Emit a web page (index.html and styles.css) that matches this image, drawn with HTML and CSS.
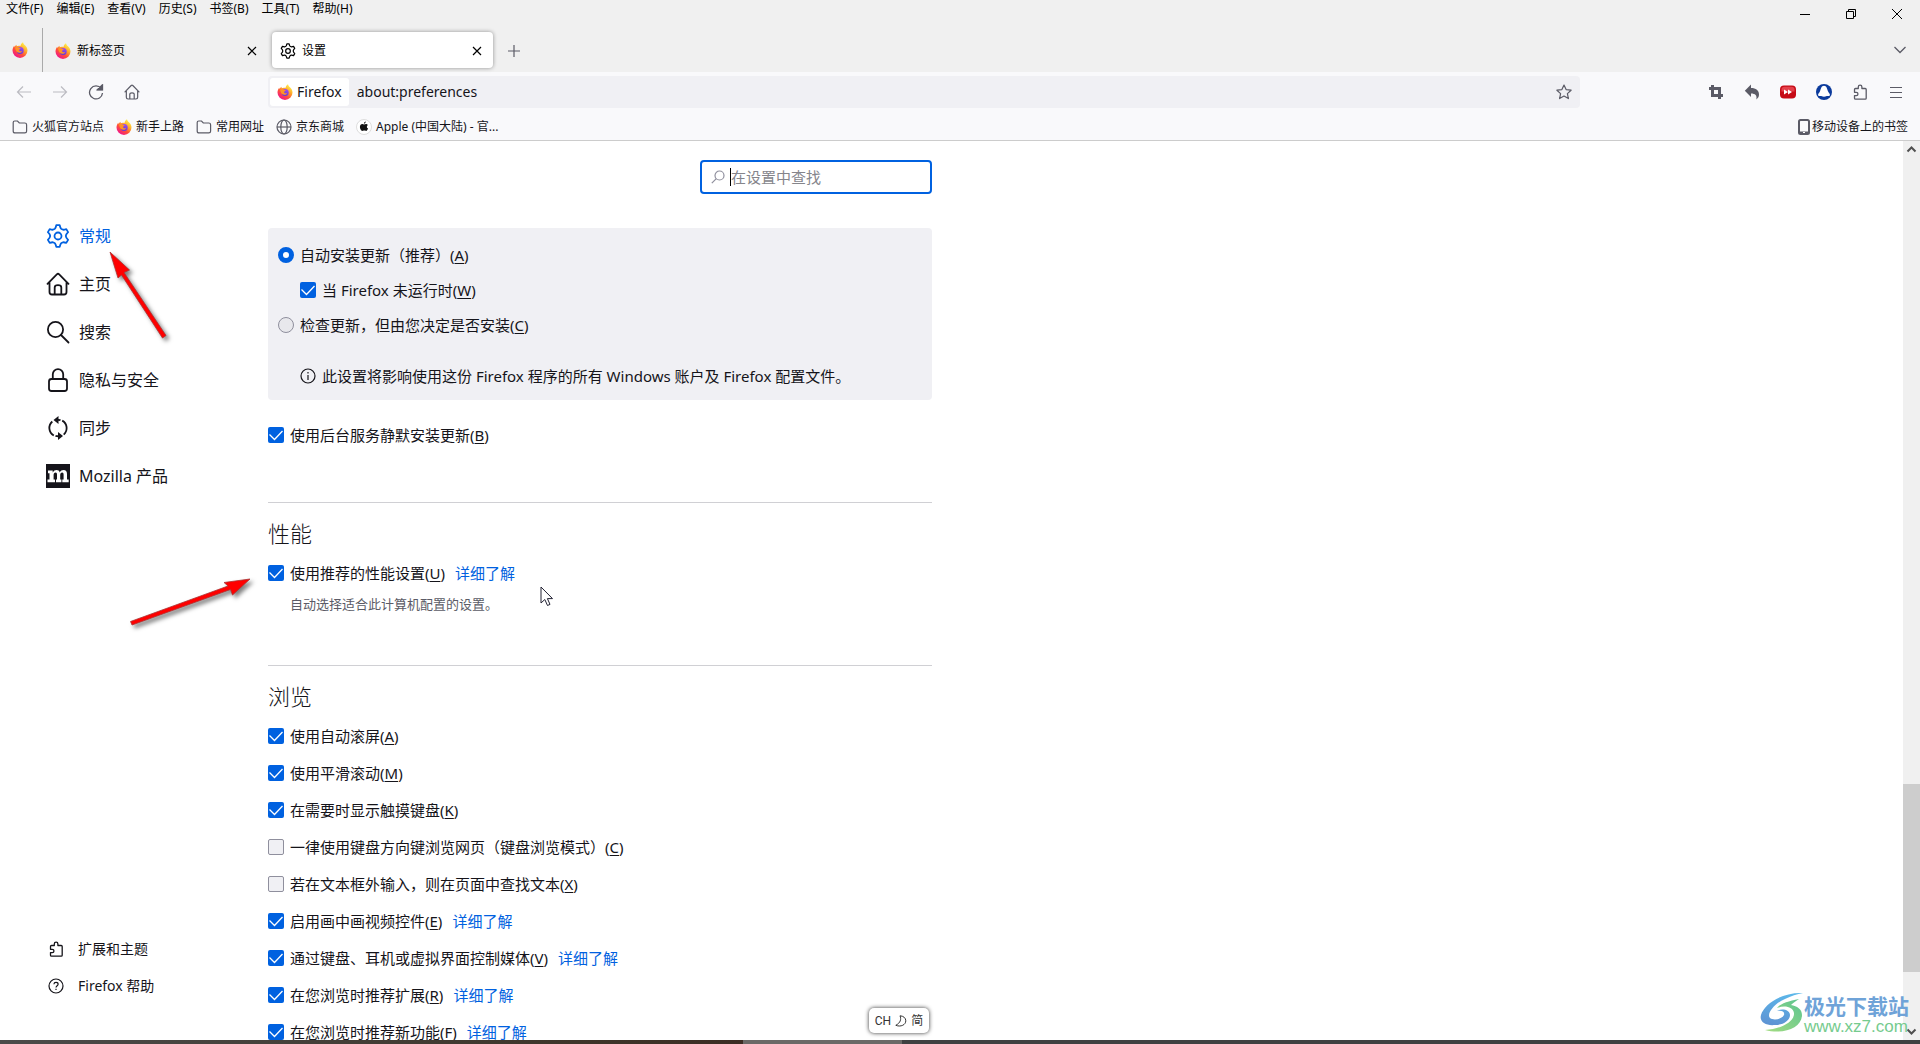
FILE: index.html
```html
<!DOCTYPE html>
<html lang="zh-CN">
<head>
<meta charset="utf-8">
<title>设置</title>
<link rel="stylesheet" href="styles.css">
</head>
<body>
<svg class="defs" aria-hidden="true">
  <defs>
    <linearGradient id="flame" x1="0.85" y1="0.1" x2="0.25" y2="0.95">
      <stop offset="0" stop-color="#fff44f"/><stop offset="0.35" stop-color="#ffa72a"/><stop offset="0.65" stop-color="#ff4f3a"/><stop offset="1" stop-color="#f0148c"/>
    </linearGradient>
    <linearGradient id="orb" x1="0.7" y1="0" x2="0.3" y2="1">
      <stop offset="0" stop-color="#a44cf0"/><stop offset="1" stop-color="#5a3ad6"/>
    </linearGradient>
    <linearGradient id="swirl" x1="0.7" y1="0" x2="0.5" y2="1">
      <stop offset="0" stop-color="#5cb8ea"/><stop offset="1" stop-color="#5e94d4"/>
    </linearGradient>
    <linearGradient id="leaf" x1="1" y1="0" x2="0" y2="1">
      <stop offset="0" stop-color="#5cc490"/><stop offset="1" stop-color="#a4dc82"/>
    </linearGradient>
    <symbol id="i-firefox" viewBox="0 0 16 16">
      <path d="M11 .2c.3 1.300.8 2 1.700 2.800 1.800 1.500 2.800 3.300 2.800 5.600A7.500 7.400 0 0 1 .5 8.600c0-2 .7-3.600 1.700-4.900l.3 1.300c.5-1 1.200-1.700 2-2.200l.2 1.400c1.200-.6 2.600-.7 3.800-.2C8.600 2.400 9.500 1.200 11 .2z" fill="url(#flame)"/>
      <circle cx="8.200" cy="8.400" r="3.500" fill="url(#orb)"/>
      <path d="M3 5.500c1.500-.9 3-.7 4 .2.700.2 1.400.2 1.800.4 0 1-1.500 1.100-1.800 1.900.3 1.400 1.800 1.700 3.200.9-.7 2.400-5 2.800-6.300-.3-.4-1-.6-2-.9-3.100z" fill="#ff9326"/>
    </symbol>
    <symbol id="i-gear" viewBox="0 0 24 24">
      <path d="M10.300 1.200h3.400q.7 2.800 1.300 3.500.9.800 2 1 1 .2 3.300-.6l1.800 3q-2.200 2.200-2.300 3.900.1 1.700 2.300 3.900l-1.800 3q-2.300-.8-3.300-.6-1.100.2-2 1-.6.700-1.300 3.500h-3.400q-.7-2.800-1.300-3.500-.9-.8-2-1-1-.2-3.300.6l-1.800-3q2.200-2.200 2.300-3.900-.1-1.700-2.300-3.900l1.800-3q2.300.8 3.300.6 1.100-.2 2-1 .6-.7 1.300-3.500z" fill="none" stroke="currentColor" stroke-width="1.800" stroke-linejoin="round"/>
      <circle cx="12" cy="12" r="3.500" fill="none" stroke="currentColor" stroke-width="1.800"/>
    </symbol>
    <symbol id="i-home" viewBox="0 0 24 24">
      <path d="M1.500 11.800 10.800 2.300q1.200-1.100 2.400 0l9.300 9.500M3.500 10.500V20q0 2.500 2.500 2.500h12q2.500 0 2.500-2.500v-9.500M8.700 22v-6.500q0-2.300 3.300-2.300t3.300 2.300V22" fill="none" stroke="currentColor" stroke-width="1.800" stroke-linecap="round"/>
    </symbol>
    <symbol id="i-search" viewBox="0 0 24 24">
      <circle cx="9.500" cy="9.500" r="7.600" fill="none" stroke="currentColor" stroke-width="1.800"/><path d="m15 15 7.500 7.500" stroke="currentColor" stroke-width="1.800" stroke-linecap="round"/>
    </symbol>
    <symbol id="i-lock" viewBox="0 0 24 24">
      <rect x="3" y="11" width="18" height="12" rx="2.500" fill="none" stroke="currentColor" stroke-width="1.800"/><path d="M6.800 11V6.300a5.200 5.200 0 0 1 10.400 0V11" fill="none" stroke="currentColor" stroke-width="1.800"/>
    </symbol>
    <symbol id="i-sync" viewBox="0 0 24 24">
      <path d="M7.800 19.500A8.600 8.600 0 0 1 6.300 5.500M16.200 4.600a8.600 8.600 0 0 1 1.500 14M10 4q2.500-.4 4.500.2M9.500 19.800q2 .7 4.500.3" fill="none" stroke="currentColor" stroke-width="1.800"/>
      <path d="M12.500 0v8L7.500 4zM12 16v8l5-4z" fill="currentColor"/>
    </symbol>
    <symbol id="i-puzzle" viewBox="0 0 16 16">
      <path d="M6.300 4.500V3a1.800 1.800 0 0 1 3.600 0v1.500h3.300q1 0 1 1v8.700q0 1-1 1H3.500q-1 0-1-1V11.600h1.800a1.600 1.600 0 0 0 0-3.300H2.500V5.500q0-1 1-1z" fill="none" stroke="currentColor" stroke-width="1.300" stroke-linejoin="round"/>
    </symbol>
    <symbol id="i-folder" viewBox="0 0 16 16">
      <path d="M1.200 4V3.500q0-1.500 1.500-1.500h2.800l1.800 2h5.500q1.800 0 1.800 1.700v6.500q0 1.700-1.800 1.700H3q-1.800 0-1.800-1.700z" fill="none" stroke="currentColor" stroke-width="1.200"/>
    </symbol>
    <symbol id="i-close" viewBox="0 0 16 16"><path d="m4 4 8 8M12 4l-8 8" stroke="currentColor" stroke-width="1.200"/></symbol>
  </defs>
</svg>

<header class="chrome">
  <div class="titlebar">
    <nav class="menubar">
      <button>文件(F)</button><button>编辑(E)</button><button>查看(V)</button><button>历史(S)</button><button>书签(B)</button><button>工具(T)</button><button>帮助(H)</button>
    </nav>
    <div class="window-controls">
      <button aria-label="最小化"><svg width="10" height="10"><path d="M0 5.500h10" stroke="#000"/></svg></button>
      <button aria-label="还原"><svg width="10" height="10" fill="none" stroke="#000"><path d="M.5 2.500h7v7h-7zM2.500 2V.5h7v7H8"/></svg></button>
      <button aria-label="关闭"><svg width="10" height="10"><path d="m0 0 10 10M10 0 0 10" stroke="#000"/></svg></button>
    </div>
  </div>
  <div class="tabstrip">
    <div class="pinned"><svg class="s16"><use href="#i-firefox"/></svg></div>
    <div class="tab">
      <svg class="s16"><use href="#i-firefox"/></svg><span>新标签页</span>
      <button aria-label="关闭标签页"><svg class="s16"><use href="#i-close"/></svg></button>
    </div>
    <div class="tab active">
      <svg class="s16"><use href="#i-gear"/></svg><span>设置</span>
      <button aria-label="关闭标签页"><svg class="s16"><use href="#i-close"/></svg></button>
    </div>
    <button class="newtab" aria-label="新建标签页"><svg width="12" height="12"><path d="M6 0v12M0 6h12" stroke="#5b5b66" stroke-width="1.200"/></svg></button>
    <button class="alltabs" aria-label="列出所有标签页"><svg width="12" height="8"><path d="m.5 1 5.500 5.500L11.500 1" fill="none" stroke="#5b5b66" stroke-width="1.300"/></svg></button>
  </div>
  <div class="toolbar">
    <button class="dim" aria-label="后退"><svg class="s16" fill="none" stroke="currentColor" stroke-width="1.200"><path d="M15 8H1.500M7 2.500 1.500 8 7 13.500"/></svg></button>
    <button class="dim" aria-label="前进"><svg class="s16" fill="none" stroke="currentColor" stroke-width="1.200"><path d="M1 8h13.500M9 2.500 14.500 8 9 13.500"/></svg></button>
    <button aria-label="重新加载"><svg class="s16" fill="none" stroke="currentColor" stroke-width="1.300"><path d="M13.200 4.500A6.500 6.500 0 1 0 14.500 9M9.500 5.500h4.700V1z"/><path d="M10 5.800h4.500V1.500z" fill="currentColor"/></svg></button>
    <button aria-label="主页"><svg class="s16"><use href="#i-home"/></svg></button>
    <div class="spring"></div>
    <div class="urlbar">
      <span class="identity"><svg class="s16"><use href="#i-firefox"/></svg>Firefox</span>
      <input type="text" value="about:preferences" aria-label="地址">
      <button aria-label="收藏"><svg class="s16" fill="none" stroke="currentColor" stroke-width="1.200" stroke-linejoin="round"><path d="m8 1 2.100 4.600 5 .6-3.700 3.400 1 5L8 12.100l-4.400 2.500 1-5L.9 6.200l5-.6z"/></svg></button>
    </div>
    <div class="spring"></div>
    <button aria-label="截图"><svg class="s16" fill="none" stroke="currentColor" stroke-width="3"><path d="M1 4.500h10.500V15M4.500 1v10.500H15"/></svg></button>
    <button aria-label="撤销"><svg class="s16"><path d="M7 .5v3.600c5 0 8 2.400 8 6.500 0 2-.8 3.700-2.700 4.800 1-4-1-6-5.300-6v3.700L.8 6.800z" fill="currentColor"/></svg></button>
    <button aria-label="视频加速"><svg class="s16"><rect y="1.500" width="16" height="13" rx="4" fill="#c60b16"/><path d="M1.500 7.500v-2q0-2.700 3-2.700h7q3 0 3 2.700v2z" fill="#e4404a"/><path d="m4 5.500 4 2.500-4 2.500zM8 5.500l4 2.500-4 2.500z" fill="#fff"/></svg></button>
    <button aria-label="扩展"><svg class="s16"><circle cx="8" cy="8" r="8" fill="#0c3b9c"/><path d="M8 1.800c2.700 0 3 3.100 4 5.400.8 1.700 2 2.600 2 3.900 0 1-1.500 1-2.600 1-.9 0-1.400.7-3.400.7s-2.500-.7-3.400-.7c-1.100 0-2.600 0-2.600-1 0-1.300 1.200-2.200 2-3.900 1-2.300 1.300-5.400 4-5.400z" fill="#fff"/></svg></button>
    <button aria-label="附加组件"><svg class="s16"><use href="#i-puzzle"/></svg></button>
    <button aria-label="菜单"><svg class="s16"><path d="M2 3.500h12M2 8.500h12M2 13.500h12" stroke="currentColor" stroke-width="1.200"/></svg></button>
  </div>
  <nav class="bookmarks">
    <a href="#"><svg class="s16"><use href="#i-folder"/></svg>火狐官方站点</a>
    <a href="#"><svg class="s16"><use href="#i-firefox"/></svg>新手上路</a>
    <a href="#"><svg class="s16"><use href="#i-folder"/></svg>常用网址</a>
    <a href="#"><svg class="s16" fill="none" stroke="currentColor" stroke-width="1.200"><circle cx="8" cy="8" r="7"/><ellipse cx="8" cy="8" rx="3.200" ry="7"/><path d="M1 8h14"/></svg>京东商城</a>
    <a href="#"><svg class="s16"><circle cx="8" cy="8" r="7.500" fill="#fff" stroke="#ddd"/><path d="M8 5.500c.8 0 1.400-.6 2.200-.5.700 0 1.300.4 1.600.9-1.400 1-1.200 2.900.3 3.600-.4 1-1.200 2.400-2 2.400-.7 0-1-.4-1.900-.4s-1.200.4-1.900.4C5 11.900 3.900 9.700 3.900 8c0-1.900 1.100-3 2.400-3 .7 0 1.200.5 1.700.5zM7.900 4.800c0-1.200.9-2.100 1.900-2.200 0 1.200-.9 2.200-1.900 2.200z" fill="#111"/></svg>Apple (中国大陆) - 官...</a>
    <a href="#" class="mobile"><svg width="12" height="16"><rect x="1" y="1" width="10" height="14" rx="1.500" fill="none" stroke="currentColor" stroke-width="2"/><path d="M1 13.500h10" stroke="currentColor" stroke-width="2"/><path d="M5 13.500h2" stroke="#fff"/></svg>移动设备上的书签</a>
  </nav>
</header>

<div class="page">
  <aside class="sidebar">
    <nav class="categories">
      <a href="#" class="selected"><svg><use href="#i-gear"/></svg>常规</a>
      <a href="#"><svg><use href="#i-home"/></svg>主页</a>
      <a href="#"><svg><use href="#i-search"/></svg>搜索</a>
      <a href="#"><svg><use href="#i-lock"/></svg>隐私与安全</a>
      <a href="#"><svg><use href="#i-sync"/></svg>同步</a>
      <a href="#"><svg><rect width="24" height="24" fill="#15141a"/><path d="M2 6.500h4.700v2C7.700 6.800 8.900 6 10.500 6c1.700 0 2.800.8 3.200 2.400C14.700 6.800 15.900 6 17.500 6c2.300 0 3.500 1.400 3.500 3.900v5.500h1.700v2.800h-6.400v-2.800h1.300v-4.800c0-1.300-.4-2-1.400-2-1.300 0-2 1.100-2 2.600v4.200h1.200v2.800H10v-2.800h1v-4.800c0-1.300-.4-2-1.400-2-1.300 0-2 1.100-2 2.600v4.200H9v2.800H1.500v-2.800h2V9.300H2z" fill="#fff"/></svg>Mozilla 产品</a>
    </nav>
    <nav class="sidefoot">
      <a href="#"><svg class="s16"><use href="#i-puzzle"/></svg>扩展和主题</a>
      <a href="#"><svg class="s16" fill="none" stroke="currentColor" stroke-width="1.200"><circle cx="8" cy="8" r="7"/><path d="M5.900 6.300C6 5 6.900 4.400 8 4.400s2.100.7 2.100 1.800C10.100 7.600 8 7.800 8 9.500M8 10.700V12"/></svg>Firefox 帮助</a>
    </nav>
  </aside>

  <main class="pane">
    <div class="searchrow">
      <label class="search">
        <svg width="14" height="14" fill="none" stroke="#8f8f9d" stroke-width="1.200"><circle cx="8.500" cy="5.500" r="4.500"/><path d="M5.300 8.700.8 13.200"/></svg>
        <i class="caret"></i><input type="text" placeholder="在设置中查找" aria-label="在设置中查找">
      </label>
    </div>
    <section class="updates">
      <div class="box">
        <label class="opt"><input type="radio" name="upd" checked><span>自动安装更新（推荐）(<u>A</u>)</span></label>
        <label class="opt indent"><input type="checkbox" checked><span>当 Firefox 未运行时(<u>W</u>)</span></label>
        <label class="opt"><input type="radio" name="upd"><span>检查更新，但由您决定是否安装(<u>C</u>)</span></label>
        <p class="opt indent note"><svg class="s16" fill="none" stroke="currentColor" stroke-width="1.200"><circle cx="8" cy="8" r="7"/><path d="M8 7v5M8 4v1.500"/></svg><span>此设置将影响使用这份 Firefox 程序的所有 Windows 账户及 Firefox 配置文件。</span></p>
      </div>
      <label class="opt"><input type="checkbox" checked><span>使用后台服务静默安装更新(<u>B</u>)</span></label>
    </section>
    <section>
      <h2>性能</h2>
      <div class="row"><label class="opt"><input type="checkbox" checked><span>使用推荐的性能设置(<u>U</u>)</span></label><a href="#">详细了解</a></div>
      <p class="desc">自动选择适合此计算机配置的设置。</p>
    </section>
    <section class="browsing">
      <h2>浏览</h2>
      <div class="row"><label class="opt"><input type="checkbox" checked><span>使用自动滚屏(<u>A</u>)</span></label></div>
      <div class="row"><label class="opt"><input type="checkbox" checked><span>使用平滑滚动(<u>M</u>)</span></label></div>
      <div class="row"><label class="opt"><input type="checkbox" checked><span>在需要时显示触摸键盘(<u>K</u>)</span></label></div>
      <div class="row"><label class="opt"><input type="checkbox"><span>一律使用键盘方向键浏览网页（键盘浏览模式）(<u>C</u>)</span></label></div>
      <div class="row"><label class="opt"><input type="checkbox"><span>若在文本框外输入，则在页面中查找文本(<u>X</u>)</span></label></div>
      <div class="row"><label class="opt"><input type="checkbox" checked><span>启用画中画视频控件(<u>E</u>)</span></label><a href="#">详细了解</a></div>
      <div class="row"><label class="opt"><input type="checkbox" checked><span>通过键盘、耳机或虚拟界面控制媒体(<u>V</u>)</span></label><a href="#">详细了解</a></div>
      <div class="row"><label class="opt"><input type="checkbox" checked><span>在您浏览时推荐扩展(<u>R</u>)</span></label><a href="#">详细了解</a></div>
      <div class="row"><label class="opt"><input type="checkbox" checked><span>在您浏览时推荐新功能(<u>F</u>)</span></label><a href="#">详细了解</a></div>
    </section>
  </main>

  <div class="scrollbar">
    <svg width="17" height="17"><path d="m4.500 10.500 4-4 4 4" fill="none" stroke="#505050" stroke-width="2"/></svg>
    <div class="track"><div class="thumb"></div></div>
    <svg width="17" height="17"><path d="m4.500 6.500 4 4 4-4" fill="none" stroke="#505050" stroke-width="2"/></svg>
  </div>
</div>
<div class="taskbar"></div>

<svg class="overlay arrow-a" width="80" height="110"><path d="m11 12 19.500 18-5.500 2.500L67 95.500l-3.500 2.500-41-63-3.500 3z" fill="#ff0000" stroke="#a33" stroke-width=".8"/></svg>
<svg class="overlay arrow-b" width="140" height="70"><path d="m131 19-17.500 16-2-5.500L13 65l-1.500-3.500L109 26l-4-3.500z" fill="#ff0000" stroke="#a33" stroke-width=".8"/></svg>
<svg class="overlay pointer" width="14" height="21"><path d="M1 1v16l3.800-3.500 2.700 6 2.500-1.100-2.600-5.800H12.500z" fill="#fff" stroke="#223" stroke-width="1"/></svg>
<div class="overlay ime"><span>CH</span><svg width="12" height="12"><path d="M5 .8c1.500 3.500.5 7-4.200 9.500 5 2 10-.5 10-4.500C10.800 3 8.500 1 5 .8z" fill="none" stroke="#333"/></svg><span>简</span></div>
<div class="overlay watermark">
  <svg width="44" height="41" viewBox="0 0 44 41"><path d="M43 1C22 0 4 12 1 23c-2 7 5 11 14 10 9 0 15-5 15-10 0-5-8-7-13-4 5-1 8 1 7 4-2 4-10 6-14 3-4-4 5-15 15-19C31 4 37 2 43 1z" fill="url(#swirl)"/><path d="M39 7C28 9 20 12 17 16c8-3 16-1 17 5 1 8-12 16-29 17 18 5 37-2 37-15 0-6-5-9-11-10 2-2 5-4 8-6z" fill="url(#leaf)"/></svg>
  <div><b>极光下载站</b><span>www.xz7.com</span></div>
</div>
</body>
</html>
```
FILE: styles.css
```css
* { box-sizing: border-box; }
body {
  margin: 0;
  height: 100vh;
  display: flex;
  flex-direction: column;
  overflow: hidden;
  background: #fff;
  color: #15141a;
  font: 15px/20px "Noto Sans", "Noto Sans CJK SC", sans-serif;
}
button {
  display: flex;
  align-items: center;
  justify-content: center;
  padding: 0;
  border: 0;
  background: none;
  color: inherit;
  font: inherit;
}
a { color: inherit; text-decoration: none; }
p, h2 { margin: 0; }
svg { flex: none; }
.defs { position: absolute; width: 0; height: 0; }
.s16 { width: 16px; height: 16px; }

/* Browser chrome */
.chrome {
  flex: none;
  background: #f9f9fb;
  border-bottom: 1px solid #ccc;
  font-size: 12px;
}
.titlebar { display: flex; height: 28px; background: #f0f0f0; }
.menubar { display: flex; gap: 13px; height: 18px; padding-left: 6px; color: #000; line-height: 18px; }
.window-controls { display: flex; margin-left: auto; }
.window-controls button { width: 46px; height: 28px; }

.tabstrip { display: flex; gap: 4px; height: 44px; background: #f0f0f0; color: #000; }
.pinned {
  display: flex;
  align-items: center;
  justify-content: center;
  width: 43px;
  padding-right: 3px;
  border-right: 1px solid #aaa;
}
.tab {
  display: flex;
  align-items: center;
  gap: 6px;
  width: 221px;
  margin: 4px 0;
  padding: 1px 8px 0;
  border-radius: 4px;
}
.tab button { margin-left: auto; }
.tab.active { background: #fff; box-shadow: 0 0 4px rgba(0, 0, 0, .4); }
.newtab { width: 34px; padding-top: 1px; }
.alltabs { width: 40px; margin-left: auto; }

.toolbar { display: flex; align-items: center; height: 40px; padding: 0 6px; color: #5b5b66; }
.toolbar > button { width: 36px; height: 32px; }
.toolbar > .dim { color: #bcbcc2; }
.spring { width: 118px; }
.urlbar {
  flex: 1;
  display: flex;
  align-items: center;
  height: 32px;
  padding: 2px;
  border-radius: 4px;
  background: #f0f0f4;
  font-size: 14px;
}
.identity {
  display: flex;
  align-items: center;
  gap: 4px;
  height: 28px;
  padding: 0 7px;
  border-radius: 3px;
  background: #fff;
  color: #15141a;
}
.urlbar input {
  flex: 1;
  padding: 0 8px;
  border: 0;
  background: none;
  color: #15141a;
  font: inherit;
}
.urlbar button { width: 28px; }

.bookmarks { display: flex; gap: 12px; height: 28px; padding: 1px 12px 0; color: #15141a; }
.bookmarks a { display: flex; align-items: center; gap: 4px; }
.bookmarks svg { color: #5b5b66; }
.bookmarks .mobile { gap: 2px; margin-left: auto; }

/* Preferences page */
.page { flex: 1; min-height: 0; display: flex; overflow: hidden; }
.sidebar {
  flex: none;
  display: flex;
  flex-direction: column;
  justify-content: space-between;
  width: 268px;
  padding: 71px 0 36px 46px;
}
.sidebar a { display: flex; align-items: center; }
.categories a { gap: 9px; height: 48px; font-size: 16px; }
.categories svg { width: 24px; height: 24px; }
.categories .selected { color: #0061e0; }
.sidefoot a { gap: 14px; height: 37px; padding-left: 2px; font-size: 14px; }

.pane { flex: 0 1 664px; min-width: 0; }
.searchrow { display: flex; justify-content: flex-end; padding: 19px 0 34px; }
.search {
  display: flex;
  align-items: center;
  width: 232px;
  height: 34px;
  padding: 0 0 1px 9px;
  border: 2px solid #0061e0;
  border-radius: 4px;
}
.caret { width: 1px; height: 18px; margin-left: 5px; background: #000; }
.search input { width: 100%; padding: 0; border: 0; outline: 0; background: none; font: inherit; }
.search input::placeholder { color: #85858b; }

section { padding: 17px 0 51px; border-top: 1px solid #d0d0d4; }
.updates { padding: 0 0 57px; border: 0; }
.box {
  display: flex;
  flex-direction: column;
  gap: 15px;
  margin-bottom: 25px;
  padding: 17px 10px 14px;
  border-radius: 4px;
  background: #f0f0f4;
}
.opt { display: flex; align-items: center; gap: 6px; }
.indent { padding-left: 22px; }
.note { margin-top: 16px; }
.row { display: flex; gap: 10px; }
.row a { color: #0061e0; }
h2 { margin-bottom: 17px; font-size: 22px; line-height: 26px; font-weight: 300; }
.desc { margin-top: 11px; padding-left: 22px; color: #5b5b66; font-size: 13px; }
.browsing .row { margin-bottom: 17px; }
u { text-underline-offset: 2px; text-decoration-thickness: 1px; }

.opt input {
  flex: none;
  appearance: none;
  width: 16px;
  height: 16px;
  margin: 0;
  border: 1px solid #8f8f9d;
  border-radius: 2px;
  background: #f0f0f4;
}
.opt input[type="radio"] { border-radius: 50%; background: #e8e8ec; }
.opt input[type="radio"]:checked { border: 5px solid #0061e0; background: #fff; }
.opt input[type="checkbox"]:checked {
  border: 0;
  background: #0061e0 url("data:image/svg+xml,%3Csvg xmlns='http://www.w3.org/2000/svg' viewBox='0 0 16 16'%3E%3Cpath d='m1.500 7.500 5 5 8-8.500' fill='none' stroke='white' stroke-width='1.300'/%3E%3C/svg%3E");
}

.scrollbar { display: flex; flex-direction: column; width: 17px; margin-left: auto; background: #f0f0f0; }
.track { flex: 1; display: flex; flex-direction: column; justify-content: flex-end; padding-bottom: 51px; }
.thumb { height: 188px; background: #cdcdcd; }
.taskbar {
  flex: none;
  height: 4px;
  background: linear-gradient(90deg, #4b4b4a, #3e352a 30%, #3c2d24 38.7%, #6b6967 38.7%, #6b6967 47%, #3f4041 47%);
}

/* Things floating above the window */
.overlay { position: absolute; pointer-events: none; }
.arrow-a, .arrow-b { filter: drop-shadow(3px 3px 2px rgba(0, 0, 0, .5)); }
.arrow-a { left: 99px; top: 240px; }
.arrow-b { left: 119px; top: 560px; }
.pointer { left: 540px; top: 586px; }
.ime {
  left: 869px;
  top: 1008px;
  display: flex;
  align-items: center;
  justify-content: center;
  gap: 4px;
  width: 60px;
  height: 25px;
  border-radius: 5px;
  background: #fff;
  box-shadow: 0 0 4px rgba(0, 0, 0, .8);
  color: #333;
  font: 12px/20px Roboto, "Noto Sans CJK SC", sans-serif;
}
.watermark { right: 11px; top: 992px; display: flex; }
.watermark div { display: flex; flex-direction: column; }
.watermark b { color: #6fa3d8; font: 700 21px/26px "Noto Sans CJK SC", sans-serif; }
.watermark span { color: #76cb8e; font: 17px/18px "Liberation Sans", sans-serif; }
```
